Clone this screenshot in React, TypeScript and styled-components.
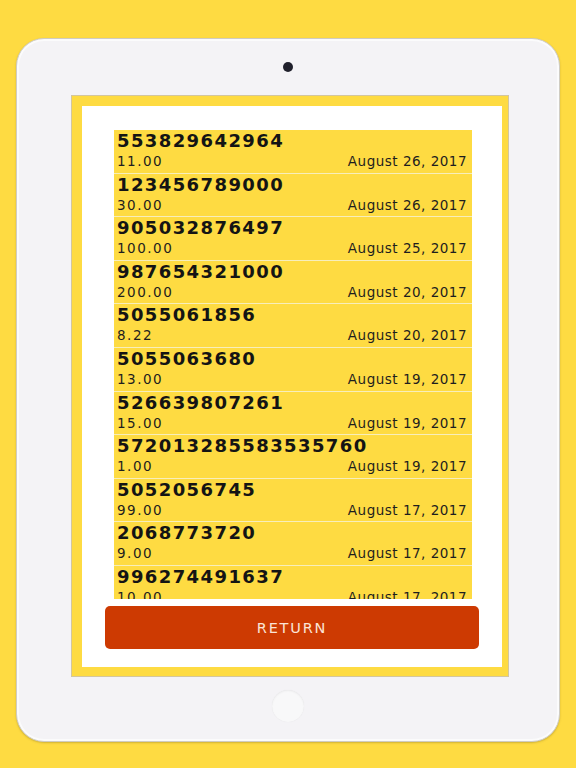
import React from "react";
import styled, { createGlobalStyle } from "styled-components";

const GlobalStyle = createGlobalStyle`
  html, body {
    margin: 0;
    padding: 0;
    background: #fedb42;
  }
  body {
    font-family: "DejaVu Sans", "Liberation Sans", sans-serif;
  }
`;

const Page = styled.div`
  width: 576px;
  height: 768px;
  padding-top: 38px;
  box-sizing: border-box;
  background: #fedb42;
`;

const Tablet = styled.div`
  margin-left: 16px;
  width: 544px;
  height: 704px;
  box-sizing: border-box;
  background: #f4f3f6;
  border: 1px solid #cfccc3;
  border-radius: 28px;
  box-shadow: inset 0 0 0 2px #fbfbfc, 0 1px 2px rgba(120, 100, 30, 0.35);
  display: flex;
  flex-direction: column;
  align-items: flex-start;
`;

const Camera = styled.div`
  width: 10px;
  height: 10px;
  border-radius: 50%;
  background: #20202c;
  margin-top: 23px;
  margin-left: 266px;
`;

const Screen = styled.div`
  margin-top: 24px;
  margin-left: 55px;
  width: 436px;
  height: 580px;
  box-sizing: border-box;
  border-style: solid;
  border-color: #fedb42;
  border-width: 10px 6px 9px 10px;
  box-shadow: 0 0 0 1px rgba(170, 145, 50, 0.45);
  background: #ffffff;
  display: flex;
  flex-direction: column;
  padding: 24px 0 18px;
`;

const List = styled.div`
  margin: 0 30px 0 32px;
  height: 469px;
  overflow: hidden;
  flex-shrink: 0;
`;

const Item = styled.div`
  height: 43.6px;
  box-sizing: border-box;
  background: #fedb42;
  border-bottom: 1px solid #f7eebb;
  padding: 0 5px 0 3px;
  color: #141414;
`;

const Account = styled.div`
  font-size: 18px;
  font-weight: bold;
  letter-spacing: 1.4px;
  line-height: 22px;
`;

const Meta = styled.div`
  display: flex;
  justify-content: space-between;
  font-size: 13.5px;
  line-height: 18px;
  color: #1e1e1e;
`;

const Amount = styled.span`
  letter-spacing: 1.5px;
`;

const DateText = styled.span`
  letter-spacing: 0.5px;
`;

const ReturnButton = styled.button`
  margin: 7px 23px 0;
  height: 43px;
  border: none;
  border-radius: 5px;
  background: #cd3a02;
  color: #fbe4d6;
  font-family: "DejaVu Sans", "Liberation Sans", sans-serif;
  font-size: 14.5px;
  letter-spacing: 1.8px;
  cursor: pointer;
`;

const HomeButton = styled.div`
  margin-top: 14px;
  margin-left: 255px;
  width: 32px;
  height: 32px;
  border-radius: 50%;
  background: #f8f8f9;
  box-shadow: inset 0 1px 2px rgba(0, 0, 0, 0.05), 0 0 1px rgba(0, 0, 0, 0.08);
`;

const records = [
  { id: "553829642964", amount: "11.00", date: "August 26, 2017" },
  { id: "123456789000", amount: "30.00", date: "August 26, 2017" },
  { id: "905032876497", amount: "100.00", date: "August 25, 2017" },
  { id: "987654321000", amount: "200.00", date: "August 20, 2017" },
  { id: "5055061856", amount: "8.22", date: "August 20, 2017" },
  { id: "5055063680", amount: "13.00", date: "August 19, 2017" },
  { id: "526639807261", amount: "15.00", date: "August 19, 2017" },
  { id: "572013285583535760", amount: "1.00", date: "August 19, 2017" },
  { id: "5052056745", amount: "99.00", date: "August 17, 2017" },
  { id: "2068773720", amount: "9.00", date: "August 17, 2017" },
  { id: "996274491637", amount: "10.00", date: "August 17, 2017" },
];

export default function App() {
  return (
    <Page>
      <GlobalStyle />
      <Tablet>
        <Camera />
        <Screen>
          <List>
            {records.map((r, i) => (
              <Item key={i}>
                <Account>{r.id}</Account>
                <Meta>
                  <Amount>{r.amount}</Amount>
                  <DateText>{r.date}</DateText>
                </Meta>
              </Item>
            ))}
          </List>
          <ReturnButton>RETURN</ReturnButton>
        </Screen>
        <HomeButton />
      </Tablet>
    </Page>
  );
}
